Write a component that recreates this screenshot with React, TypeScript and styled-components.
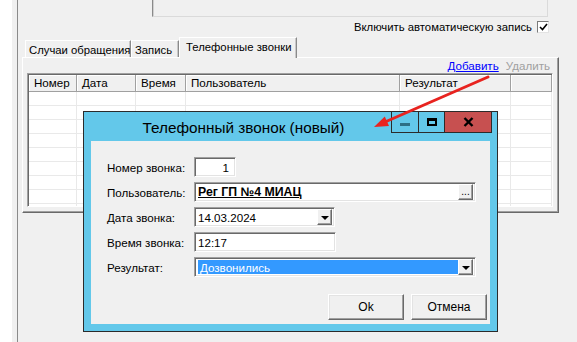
import styled, { createGlobalStyle } from "styled-components";

const GlobalStyle = createGlobalStyle`
  html, body { margin: 0; padding: 0; }
  body {
    background: #f0f0f0;
    font-family: "Liberation Sans", Arial, sans-serif;
    font-size: 11.3px;
    color: #000;
  }
`;

const Page = styled.div`
  position: relative;
  width: 577px;
  height: 342px;
  overflow: hidden;
  display: flex;
  background: #f0f0f0;
`;

const WhiteStrip = styled.div`
  width: 12px;
  background: #fff;
`;

const Main = styled.div`
  flex: 1;
  margin-left: 5px;
  border-left: 1px solid #8a8a8a;
  display: flex;
  flex-direction: column;
`;

const TopPanel = styled.div`
  box-sizing: border-box;
  margin-left: 134px;
  width: 396px;
  height: 17px;
  border-left: 1px solid #8a8a8a;
  border-right: 1px solid #dadada;
  border-bottom: 1px solid #dadada;
  box-shadow: inset 1px 0 0 #d0d0d0;
`;

const CheckRow = styled.div`
  height: 20px;
  display: flex;
  align-items: center;
  justify-content: flex-end;
  gap: 5px;
  padding-right: 28px;
`;

const CheckBox = styled.span`
  box-sizing: border-box;
  width: 12px;
  height: 12px;
  background: #fff;
  border-top: 1px solid #7a7a7a;
  border-left: 1px solid #7a7a7a;
  border-right: 1px solid #e3e3e3;
  border-bottom: 1px solid #e3e3e3;
  display: flex;
  align-items: center;
  justify-content: center;
`;

const TabsArea = styled.div`
  margin-left: 4px;
  width: 537px;
  display: flex;
  flex-direction: column;
`;

const TabStrip = styled.div`
  height: 20px;
  display: flex;
  align-items: flex-end;
  padding-left: 3px;
  position: relative;
  z-index: 1;
`;

const Tab = styled.div<{ $active?: boolean; $w: number }>`
  box-sizing: border-box;
  width: ${(p) => p.$w}px;
  height: ${(p) => (p.$active ? 21 : 17)}px;
  margin-bottom: ${(p) => (p.$active ? -1 : 0)}px;
  background: #f0f0f0;
  border-top: 1px solid #fff;
  border-left: 1px solid #fff;
  border-right: 1px solid #8a8a8a;
  box-shadow: inset -1px 0 0 #c8c8c8;
  padding: ${(p) => (p.$active ? "2px 0 0 6px" : "2px 0 0 3px")};
  white-space: nowrap;
  overflow: hidden;
  line-height: 14px;
  font-size: 11.3px;
`;

const Panel = styled.div`
  box-sizing: border-box;
  height: 156px;
  border-top: 1px solid #fff;
  border-left: 1px solid #fff;
  border-right: 1px solid #696969;
  border-bottom: 1px solid #696969;
  box-shadow: inset -1px -1px 0 #a0a0a0;
  padding: 0 5px 0 4px;
  display: flex;
  flex-direction: column;
`;

const ActionRow = styled.div`
  height: 15px;
  display: flex;
  justify-content: flex-end;
  align-items: center;
  gap: 7px;
  padding-right: 3px;
  font-size: 11.6px;
`;

const LinkAction = styled.span<{ $disabled?: boolean }>`
  color: ${(p) => (p.$disabled ? "#a0a0a0" : "#0000ff")};
  text-decoration: ${(p) => (p.$disabled ? "none" : "underline")};
`;

const Grid = styled.div`
  box-sizing: border-box;
  height: 134px;
  border-top: 1px solid #a0a0a0;
  border-left: 1px solid #a0a0a0;
  border-right: 1px solid #fff;
  border-bottom: 1px solid #fff;
  box-shadow: inset 1px 1px 0 #696969;
  padding: 1px 0 0 1px;
  background: #fff;
  overflow: hidden;
  display: grid;
  grid-template-columns: 48px 59px 50px 214px 111px 1fr;
  grid-auto-rows: 14px;
  grid-template-rows: 17px;
`;

const HeadCell = styled.div`
  background: #f0f0f0;
  border-right: 1px solid #a0a0a0;
  border-bottom: 1px solid #a0a0a0;
  box-shadow: inset 1px 1px 0 #fff;
  padding-left: 5px;
  line-height: 16px;
  white-space: nowrap;
  overflow: hidden;
  font-size: 11.6px;
`;

const BodyCell = styled.div`
  border-right: 1px solid #e9e9e9;
  border-bottom: 1px solid #e9e9e9;
`;

const Window = styled.div`
  position: absolute;
  left: 83px;
  top: 111px;
  width: 415px;
  height: 221px;
  box-sizing: border-box;
  border: 1px solid #2b2b2b;
  background: #63c8ea;
  display: flex;
  flex-direction: column;
  padding: 0 7px 7px;
  z-index: 2;
`;

const TitleBar = styled.div`
  height: 29px;
  display: flex;
  align-items: flex-start;
`;

const Title = styled.div`
  flex: 1;
  text-align: center;
  font-size: 15.3px;
  line-height: 15px;
  padding-top: 8px;
  padding-left: 4px;
  color: #000;
`;

const CaptionButtons = styled.div`
  display: flex;
  margin-top: -1px;
  margin-right: -2px;
`;

const CaptionButton = styled.div<{ $w: number; $close?: boolean }>`
  box-sizing: border-box;
  width: ${(p) => p.$w}px;
  height: 22px;
  background: ${(p) => (p.$close ? "#c75050" : "#63c8ea")};
  border: 1px solid #2b2b2b;
  margin-left: -1px;
  display: flex;
  align-items: center;
  justify-content: center;
`;

const MinBar = styled.span`
  width: 10px;
  height: 3px;
  margin-top: 4px;
  background: #2d6f86;
`;

const MaxBox = styled.span`
  box-sizing: border-box;
  width: 10px;
  height: 8px;
  border: 2px solid #000;
  border-top-width: 3px;
`;

const Client = styled.div`
  flex: 1;
  background: #f0f0f0;
  display: flex;
  flex-direction: column;
  padding: 16px 3px 4px 16px;
`;

const Form = styled.div`
  display: grid;
  grid-template-columns: 87px auto;
  grid-auto-rows: 20px;
  row-gap: 5px;
  align-items: center;
  justify-items: start;
`;

const Label = styled.div`
  font-size: 11.6px;
`;

const Field = styled.div<{ $w: number; $right?: boolean }>`
  box-sizing: border-box;
  width: ${(p) => p.$w}px;
  height: 20px;
  background: #fff;
  border-top: 1px solid #a0a0a0;
  border-left: 1px solid #a0a0a0;
  border-right: 1px solid #fff;
  border-bottom: 1px solid #fff;
  box-shadow: inset 1px 1px 0 #696969, inset -1px -1px 0 #e3e3e3;
  display: flex;
  align-items: center;
  justify-content: ${(p) => (p.$right ? "flex-end" : "flex-start")};
  padding: 2px;
  padding-left: 3px;
  padding-right: ${(p) => (p.$right ? "6px" : "2px")};
  font-size: 11.6px;
  white-space: nowrap;
`;

const UserName = styled.span`
  flex: 1;
  font-weight: bold;
  text-decoration: underline;
  font-size: 12.3px;
`;

const Selected = styled.span`
  flex: 1;
  align-self: stretch;
  background: #3399ff;
  color: #fff;
  display: flex;
  align-items: center;
  padding-left: 2px;
`;

const SmallButton = styled.div`
  box-sizing: border-box;
  width: 15px;
  height: 16px;
  background: #f0f0f0;
  border-top: 1px solid #fff;
  border-left: 1px solid #fff;
  border-right: 1px solid #696969;
  border-bottom: 1px solid #696969;
  box-shadow: inset -1px -1px 0 #a0a0a0;
  display: flex;
  align-items: center;
  justify-content: center;
  font-size: 10px;
  line-height: 8px;
  margin-left: auto;
`;

const Arrow = styled.span`
  width: 0;
  height: 0;
  border-left: 4px solid transparent;
  border-right: 4px solid transparent;
  border-top: 4px solid #000;
  margin-top: 1px;
`;

const ButtonRow = styled.div`
  margin-top: auto;
  display: flex;
  justify-content: flex-end;
  gap: 7px;
`;

const PushButton = styled.div`
  box-sizing: border-box;
  width: 76px;
  height: 26px;
  background: #f0f0f0;
  border-top: 1px solid #fff;
  border-left: 1px solid #fff;
  border-right: 1px solid #696969;
  border-bottom: 1px solid #696969;
  box-shadow: inset -1px -1px 0 #a0a0a0, inset 1px 1px 0 #e3e3e3;
  display: flex;
  align-items: center;
  justify-content: center;
  font-size: 12px;
`;

const Overlay = styled.svg`
  position: absolute;
  left: 0;
  top: 0;
  pointer-events: none;
  z-index: 3;
`;

const columns = ["Номер", "Дата", "Время", "Пользователь", "Результат", ""];

export default function App() {
  const rows = Array.from({ length: 9 });
  return (
    <>
      <GlobalStyle />
      <Page>
        <WhiteStrip />
        <Main>
          <TopPanel />
          <CheckRow>
            <span>Включить автоматическую запись</span>
            <CheckBox>
              <svg width="9" height="8" viewBox="0 0 9 8">
                <polyline points="1,4 3.5,6.5 8,1" fill="none" stroke="#000" strokeWidth="1.6" />
              </svg>
            </CheckBox>
          </CheckRow>
          <TabsArea>
            <TabStrip>
              <Tab $w={106}>Случаи обращения</Tab>
              <Tab $w={48}>Запись</Tab>
              <Tab $w={118} $active>
                Телефонные звонки
              </Tab>
            </TabStrip>
            <Panel>
              <ActionRow>
                <LinkAction>Добавить</LinkAction>
                <LinkAction $disabled>Удалить</LinkAction>
              </ActionRow>
              <Grid>
                {columns.map((c, i) => (
                  <HeadCell key={i}>{c}</HeadCell>
                ))}
                {rows.map((_, r) =>
                  columns.map((_, c) => <BodyCell key={`${r}-${c}`} />)
                )}
              </Grid>
            </Panel>
          </TabsArea>
        </Main>

        <Window>
          <TitleBar>
            <Title>Телефонный звонок (новый)</Title>
            <CaptionButtons>
              <CaptionButton $w={28}>
                <MinBar />
              </CaptionButton>
              <CaptionButton $w={27}>
                <MaxBox />
              </CaptionButton>
              <CaptionButton $w={48} $close>
                <svg width="11" height="10" viewBox="0 0 11 10">
                  <path d="M1.5 1 L9.5 9 M9.5 1 L1.5 9" stroke="#000" strokeWidth="2.4" />
                </svg>
              </CaptionButton>
            </CaptionButtons>
          </TitleBar>
          <Client>
            <Form>
              <Label>Номер звонка:</Label>
              <Field $w={42} $right>
                1
              </Field>
              <Label>Пользователь:</Label>
              <Field $w={282}>
                <UserName>Рег ГП №4 МИАЦ</UserName>
                <SmallButton>...</SmallButton>
              </Field>
              <Label>Дата звонка:</Label>
              <Field $w={141}>
                <span>14.03.2024</span>
                <SmallButton>
                  <Arrow />
                </SmallButton>
              </Field>
              <Label>Время звонка:</Label>
              <Field $w={142}>12:17</Field>
              <Label>Результат:</Label>
              <Field $w={282}>
                <Selected>Дозвонились</Selected>
                <SmallButton>
                  <Arrow />
                </SmallButton>
              </Field>
            </Form>
            <ButtonRow>
              <PushButton>Ok</PushButton>
              <PushButton>Отмена</PushButton>
            </ButtonRow>
          </Client>
        </Window>

        <Overlay width="577" height="342" viewBox="0 0 577 342">
          <line x1="488" y1="77" x2="385" y2="122" stroke="#e8231f" strokeWidth="3" strokeLinecap="round" />
          <polygon points="374,127 384.8,116.5 389,126" fill="#e8231f" />
        </Overlay>
      </Page>
    </>
  );
}
